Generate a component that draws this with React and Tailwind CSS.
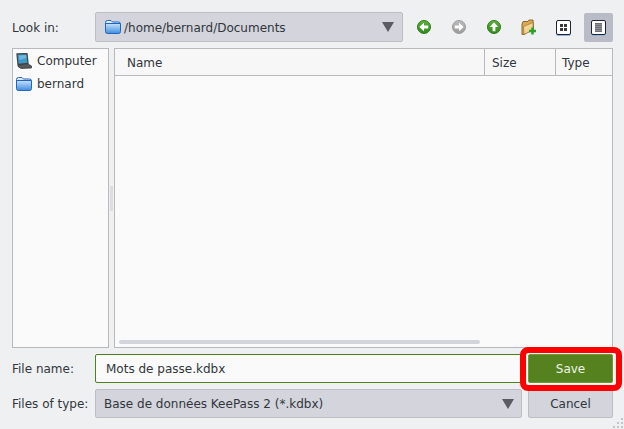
function FolderIcon({ id }) {
  return (
    <svg width="16" height="14" viewBox="0 0 16 14">
      <defs>
        <linearGradient id={id} x1="0" y1="0" x2="0" y2="1">
          <stop offset="0" stopColor="#f2f7fd" />
          <stop offset="0.4" stopColor="#a9cff4" />
          <stop offset="1" stopColor="#3f8de4" />
        </linearGradient>
      </defs>
      <path d="M0.5 2.5 Q0.5 0.5 2.5 0.5 H6 L7.5 2 H13.5 Q15.5 2 15.5 4 V11.5 Q15.5 13.5 13.5 13.5 H2.5 Q0.5 13.5 0.5 11.5 Z" fill={`url(#${id})`} stroke="#1f66bd" />
      <path d="M1 3.5 H15" stroke="#1f66bd" />
    </svg>
  );
}

function ComputerIcon() {
  return (
    <svg width="16" height="16" viewBox="0 0 16 16">
      <path d="M1 1 L11 0.5 L12 10.5 L2 11.5 Z" fill="#3d9ac8" stroke="#44474b" strokeWidth="1.3" />
      <path d="M3 2.5 L10 2 L10.5 5 L3.5 7 Z" fill="#6db7dc" />
      <path d="M2 12 L12 11 L15.5 13 V15 L5 15.5 L2 13.5 Z" fill="#56585c" stroke="#2e3033" strokeWidth="0.7" />
    </svg>
  );
}

// round glossy nav button, the arrow is passed as polygon points
function NavIcon({ id, points, gray }) {
  return (
    <svg width="14" height="14" viewBox="0 0 15 15">
      <defs>
        <linearGradient id={id} x1="0" y1="0" x2="0" y2="1">
          <stop offset="0" stopColor={gray ? '#bdbdbd' : '#5fae3c'} />
          <stop offset="1" stopColor={gray ? '#9a9a9a' : '#2f8a1c'} />
        </linearGradient>
      </defs>
      <circle cx="7.5" cy="7.5" r="7" fill={`url(#${id})`} stroke={gray ? '#9c9c9c' : '#2c7a18'} />
      <polygon points={points} fill="#ffffff" />
    </svg>
  );
}

function ToolButton({ children, active }) {
  return (
    <div className={`w-[29px] h-[29px] rounded-[2px] flex items-center justify-center ${active ? 'bg-[#b9bbc7]' : ''}`}>
      {children}
    </div>
  );
}

function Arrow() {
  return <div className="w-0 h-0 border-x-[6px] border-x-transparent border-t-[10px] border-t-[#5b5c61]" />;
}

export default function App() {
  return (
    <div className="relative w-[624px] h-[429px] bg-[#eff0f2] text-[#31363b] text-[12px] flex flex-col pl-3 pr-[11px] pt-3 overflow-hidden font-['DejaVu_Sans',sans-serif]">
      {/* Look in row */}
      <div className="flex items-center h-[30px]">
        <span className="w-[83px] pt-[1px]">Look in:</span>
        <div className="w-[308px] h-[30px] flex items-center pl-[9px] pr-[8px] bg-[#d3d4dc] border border-[#bdbec4] rounded-[2px]">
          <FolderIcon id="folderCombo" />
          <span className="ml-[3px] pt-[1px]">/home/bernard/Documents</span>
          <div className="ml-auto"><Arrow /></div>
        </div>
        <div className="flex items-center ml-[6px] gap-[6px]">
          <ToolButton><NavIcon id="navBack" points="2.5,7.5 7.5,3 7.5,6 12,6 12,9 7.5,9 7.5,12" /></ToolButton>
          <ToolButton><NavIcon id="navNext" gray points="12.5,7.5 7.5,3 7.5,6 3,6 3,9 7.5,9 7.5,12" /></ToolButton>
          <ToolButton><NavIcon id="navUp" points="7.5,2.5 12,7.5 9,7.5 9,12 6,12 6,7.5 3,7.5" /></ToolButton>
          <ToolButton>
            <svg width="16" height="16" viewBox="0 0 16 16">
              <path d="M1 5 L2 2.5 L7 2.5 L8 1 H12 L12.5 10 L3 15.5 H1 Z" fill="#dca94f" stroke="#8a6a32" />
              <path d="M2.5 7.5 L12 3.5 V11 L3 15.5 Z" fill="#f3d592" stroke="#8a6a32" strokeWidth="0.6" />
              <path d="M11.5 8.5 V15.5 M8 12 H15" stroke="#2fa02f" strokeWidth="2.6" />
            </svg>
          </ToolButton>
          <ToolButton>
            <div className="w-[15px] h-[15px] bg-white border border-[#20242c] rounded-[2px] grid grid-cols-2 gap-[1px] p-[3px] shadow-[0_1px_0_#8fb4e0]">
              <div className="bg-[#3a3a3a]" />
              <div className="bg-[#3a3a3a]" />
              <div className="bg-[#3a3a3a]" />
              <div className="bg-[#3a3a3a]" />
            </div>
          </ToolButton>
          <ToolButton active>
            <div className="w-[15px] h-[15px] bg-white border border-[#20242c] rounded-[2px] px-[3px] py-[2px] shadow-[0_1px_0_#8fb4e0]">
              <div className="w-full h-full bg-[repeating-linear-gradient(to_bottom,#6f7074_0,#6f7074_1px,#8f9094_1px,#8f9094_2px)]" />
            </div>
          </ToolButton>
        </div>
      </div>

      {/* Sidebar and file list */}
      <div className="flex h-[300px] mt-[6px]">
        <div className="w-[97px] bg-[#fafafa] border border-[#b8b9bc] pl-[3px] pt-[1px]">
          <div className="flex items-center gap-[5px] h-[22px]">
            <ComputerIcon />
            <span>Computer</span>
          </div>
          <div className="flex items-center gap-[5px] h-[24px]">
            <FolderIcon id="folderSide" />
            <span>bernard</span>
          </div>
        </div>
        <div className="w-[5px] flex items-center justify-center">
          <div className="w-[3px] h-[25px] bg-[#dcdde0]" />
        </div>
        <div className="w-[499px] bg-[#fafafa] border border-[#b8b9bc] flex flex-col">
          <div className="flex h-[27px] border-b border-[#b8b9bc] bg-[#f7f7f8] items-center">
            <div className="w-[369px] pl-3 pt-[1px] h-full flex items-center">Name</div>
            <div className="w-[71px] pl-[7px] pt-[1px] h-full flex items-center border-l border-[#b8b9bc]">Size</div>
            <div className="flex-1 pl-[6px] pt-[1px] h-full flex items-center border-l border-[#b8b9bc]">Type</div>
          </div>
          <div className="flex-1 flex flex-col justify-end px-1 pb-[3px]">
            <div className="w-[361px] h-[4px] rounded-full bg-[#d3d4dc]" />
          </div>
        </div>
      </div>

      {/* File name row */}
      <div className="flex items-center h-[29px] mt-[6px]">
        <span className="w-[83px] pt-[1px]">File name:</span>
        <div className="w-[428px] h-[29px] flex items-center pl-[10px] pt-[1px] bg-[#fafafa] border border-[#4d7f1e] rounded-[2px]">
          Mots de passe.kdbx
        </div>
        <div className="w-[85px] h-[29px] ml-[5px] flex items-center justify-center pt-[1px] bg-[#55821f] border border-[#6c9a36] rounded-[2px] text-[#eef3e6] ring-2 ring-[#f4f6f1]">
          Save
        </div>
      </div>

      {/* Files of type row */}
      <div className="flex items-center h-[29px] mt-[6px]">
        <span className="w-[83px] pt-[1px]">Files of type:</span>
        <div className="w-[427px] h-[29px] flex items-center pl-[8px] pr-[7px] bg-[#d3d4dc] border border-[#bdbec4] rounded-[2px]">
          <span className="pt-[1px]">Base de données KeePass 2 (*.kdbx)</span>
          <div className="ml-auto"><Arrow /></div>
        </div>
        <div className="w-[85px] h-[29px] ml-[6px] flex items-center justify-center pt-[1px] bg-[#d3d4dc] border border-[#bdbec4] rounded-[2px]">
          Cancel
        </div>
      </div>

      {/* Red highlight around Save */}
      <div className="absolute left-[520px] top-[347px] w-[102px] h-[44px] border-[6px] border-[#fe0000] rounded-[8px]" />

      {/* Resize grip */}
      <svg className="absolute right-0 bottom-0" width="12" height="12" viewBox="0 0 12 12" fill="#c4c5c9">
        <rect x="9" y="1" width="2" height="2" />
        <rect x="5" y="5" width="2" height="2" />
        <rect x="9" y="5" width="2" height="2" />
        <rect x="1" y="9" width="2" height="2" />
        <rect x="5" y="9" width="2" height="2" />
        <rect x="9" y="9" width="2" height="2" />
      </svg>
    </div>
  );
}
